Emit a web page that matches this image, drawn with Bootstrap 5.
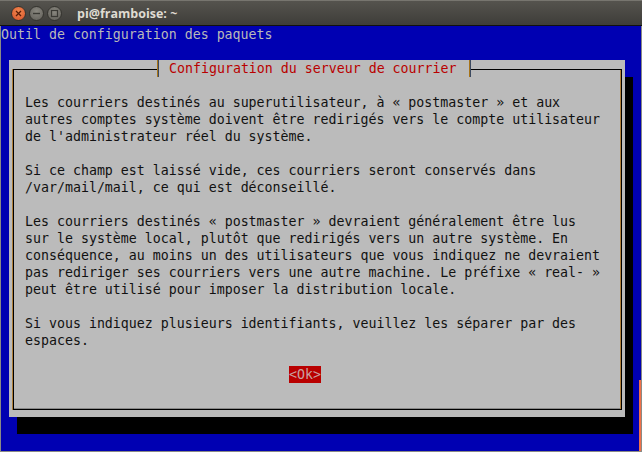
<!DOCTYPE html>
<html lang="fr"><head><meta charset="utf-8">
<link href="https://cdn.jsdelivr.net/npm/bootstrap@5.3.0/dist/css/bootstrap.min.css" rel="stylesheet">
<style>
html,body{margin:0;background:#888;overflow:hidden}
.winbox{width:642px;height:452px;padding:0 1px 1px;background:#8a8a85}
.tbar{height:26px;flex:none;margin:0 -1px;background:linear-gradient(#55534e,#3e3d39);border-top:1px solid #77756f;border-bottom:1px solid #111;gap:3px;padding-left:11px}
.wbtn{width:15px;height:15px;border-radius:50%;background:radial-gradient(circle at 50% 35%,#8a8880,#5f5d57);border:1px solid #35342f}
.wbtn.closer{background:radial-gradient(circle at 50% 35%,#f08a50,#d9502a)}
.wbtn svg{display:block}
.wtitle{margin-left:12px;font:700 12.5px "Open Sans",sans-serif;color:#dfdbd2}
.term{position:relative;height:425px;background:#0000b2;font:13.28px/17px "DejaVu Sans Mono",monospace;color:#b9b9b9}
.rowline{display:block;height:17px;white-space:pre}
.dlg{margin:17px 0 0 8px;width:616px;height:357px;background:#bbb;box-shadow:8px 17px 0 #000;padding:9px 3px 7px 4px;position:relative;color:#111}
.frame{height:100%;border:1px solid #000;box-shadow:-1px 0 0 #b0803a,inset -1px 0 0 #b0803a,inset 0 -1px 0 #888;padding:7px 0 0 11px}
.dtitle{position:absolute;left:148px;top:0;height:17px;padding:0 12px 0 11px;background:#bbb;color:#b90000;border-left:1px solid #a87418;border-right:1px solid #a87418;box-shadow:1px 0 0 #3c4a60,inset 1px 0 0 #3c4a60}
.okbtn{position:absolute;left:280px;top:306px;width:32px;height:17px;background:#b90000;color:#c8a0a0;text-align:center}
.cursorbar{position:absolute;right:0;bottom:0;width:2px;height:71px;background:#f07048}
</style></head><body>
<div class="winbox d-flex flex-column">
<div class="tbar d-flex align-items-center">
<span class="wbtn closer"><svg width="13" height="13" viewBox="0 0 13 13"><path d="M4 4l5 5M9 4l-5 5" stroke="#5a1c08" stroke-width="1.3"/></svg></span>
<span class="wbtn"><svg width="13" height="13" viewBox="0 0 13 13"><path d="M3 6.5h7" stroke="#3a3934" stroke-width="1.4"/></svg></span>
<span class="wbtn"><svg width="13" height="13" viewBox="0 0 13 13"><rect x="3.5" y="3.5" width="6" height="6" fill="none" stroke="#3a3934" stroke-width="1.2"/></svg></span>
<span class="wtitle">pi@framboise: ~</span>
</div>
<div class="term">
<span class="rowline">Outil de configuration des paquets</span>
<div class="dlg">
<div class="frame">
<span class="rowline"> </span>
<span class="rowline">Les courriers destinés au superutilisateur, à « postmaster » et aux</span>
<span class="rowline">autres comptes système doivent être redirigés vers le compte utilisateur</span>
<span class="rowline">de l'administrateur réel du système.</span>
<span class="rowline"> </span>
<span class="rowline">Si ce champ est laissé vide, ces courriers seront conservés dans</span>
<span class="rowline">/var/mail/mail, ce qui est déconseillé.</span>
<span class="rowline"> </span>
<span class="rowline">Les courriers destinés « postmaster » devraient généralement être lus</span>
<span class="rowline">sur le système local, plutôt que redirigés vers un autre système. En</span>
<span class="rowline">conséquence, au moins un des utilisateurs que vous indiquez ne devraient</span>
<span class="rowline">pas rediriger ses courriers vers une autre machine. Le préfixe « real- »</span>
<span class="rowline">peut être utilisé pour imposer la distribution locale.</span>
<span class="rowline"> </span>
<span class="rowline">Si vous indiquez plusieurs identifiants, veuillez les séparer par des</span>
<span class="rowline">espaces.</span>
</div>
<span class="dtitle">Configuration du serveur de courrier</span>
<span class="okbtn">&lt;Ok&gt;</span>
</div>
<div class="cursorbar"></div>
</div>
</div>
</body></html>
